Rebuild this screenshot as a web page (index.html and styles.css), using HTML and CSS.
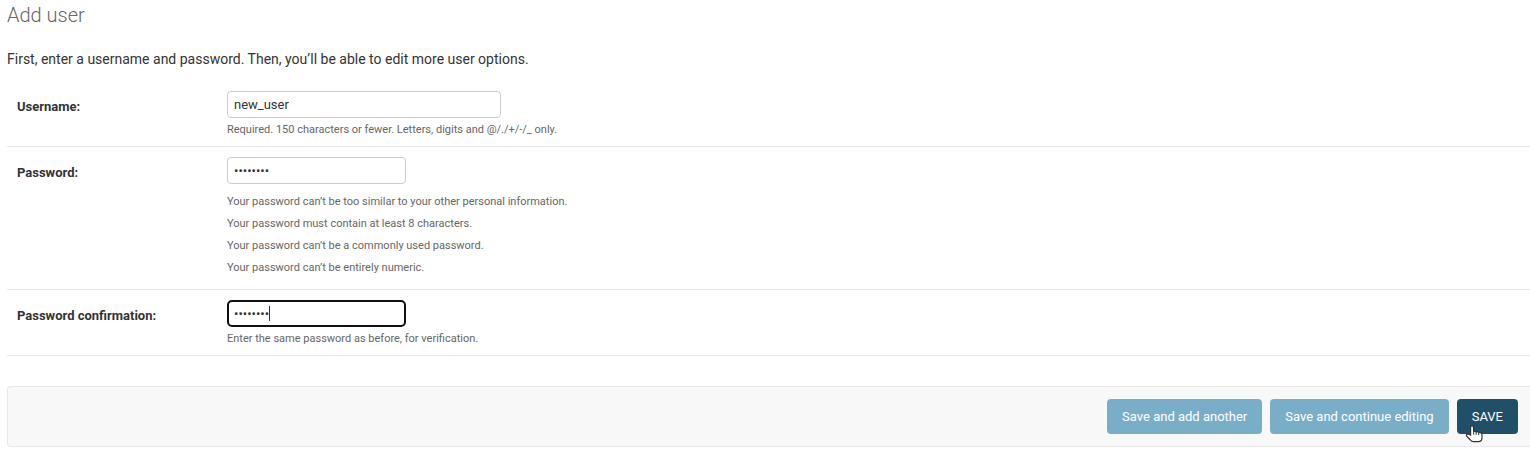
FILE: index.html
```html
<!DOCTYPE html>
<html lang="en">
<head>
<meta charset="utf-8">
<title>Add user</title>
<link rel="stylesheet" href="styles.css">
</head>
<body>
<main class="content">
  <h1 class="title">Add user</h1>
  <form>
    <p class="intro">First, enter a username and password. Then, you’ll be able to edit more user options.</p>
    <div class="form-row">
      <label class="label" for="username">Username:</label>
      <div class="field">
        <input class="input input-wide" id="username" type="text" value="new_user">
        <div class="help">Required. 150 characters or fewer. Letters, digits and @/./+/-/_ only.</div>
      </div>
    </div>
    <div class="form-row">
      <label class="label" for="password1">Password:</label>
      <div class="field">
        <input class="input" id="password1" type="password" value="password">
        <ul class="help-list">
          <li>Your password can’t be too similar to your other personal information.</li>
          <li>Your password must contain at least 8 characters.</li>
          <li>Your password can’t be a commonly used password.</li>
          <li>Your password can’t be entirely numeric.</li>
        </ul>
      </div>
    </div>
    <div class="form-row">
      <label class="label" for="password2">Password confirmation:</label>
      <div class="field">
        <div class="focus-wrap">
          <input class="input input-focus" id="password2" type="password" value="password">
          <span class="caret"></span>
        </div>
        <div class="help">Enter the same password as before, for verification.</div>
      </div>
    </div>
    <div class="submit-row">
      <button class="button" type="button">Save and add another</button>
      <button class="button" type="button">Save and continue editing</button>
      <button class="button button-default" type="button">SAVE</button>
    </div>
  </form>
</main>
<svg class="cursor" viewBox="0 0 20 20" width="20" height="20">
  <path d="M5.6 11.2V3.2Q5.6 1.8 7.1 1.8T8.6 3.2V7.6Q10.2 6.6 11.2 8Q12.8 7.1 13.7 8.5Q17 8.1 17 11V13.8Q17 17.7 13.2 17.7H8.4Q6.6 17.7 5.4 16L1.6 12Q.8 10.4 2.5 10.1Q3.8 9.8 5.6 11.2Z" fill="#fff" stroke="#333" stroke-width="1.2" stroke-linejoin="round"/>
  <path d="M8.7 7.7v3M11.2 8v2.8M13.7 8.5v2.5" fill="none" stroke="#333"/>
</svg>
</body>
</html>
```
FILE: styles.css
```css
* { box-sizing: border-box; }
body {
  margin: 0;
  height: 453px;
  overflow: hidden;
  background: #fff;
  color: #333;
  font: 14px "Roboto", "Liberation Sans", sans-serif;
}
.content { padding-left: 7px; }
.title { margin: 0; padding-top: 3px; height: 50px; font-size: 20px; line-height: 24px; font-weight: 300; color: #666; }
.intro { margin: 0; height: 31px; line-height: 18px; }
.form-row { display: flex; padding: 10px; border-bottom: 1px solid #e8e8e8; }
.label { width: 210px; padding-top: 8px; font-size: 13px; line-height: 15px; font-weight: 700; }
.field { display: flex; flex-direction: column; align-items: flex-start; }
.input {
  width: 179px;
  height: 27px;
  padding: 5px 6px;
  border: 1px solid #ccc;
  border-radius: 4px;
  outline: none;
  background: #fff;
  color: #333;
  font: 13px "Roboto", "Liberation Sans", sans-serif;
}
.input-wide { width: 274px; }
.input-focus { border: 2px solid #101010; border-radius: 5px; padding: 4px 5px; display: block; }
.focus-wrap { position: relative; }
.caret { position: absolute; left: 42px; top: 6px; width: 1px; height: 15px; background: #333; }
.help { padding-top: 5px; height: 18px; font-size: 11px; line-height: 14px; color: #666; }
.help-list { list-style: none; margin: 7px 0 0; padding: 0; font-size: 11px; line-height: 22px; color: #666; }
.submit-row {
  display: flex;
  justify-content: flex-end;
  gap: 8px;
  height: 61px;
  margin-top: 30px;
  padding: 12px 12px 12px 14px;
  border: 1px solid #e8e8e8;
  border-right: 0;
  border-radius: 4px 0 0 4px;
  background: #f8f8f8;
}
.button {
  height: 35px;
  padding: 0 15px;
  border: 0;
  border-radius: 4px;
  background: #79aec8;
  color: #fff;
  font: 13px "Roboto", "Liberation Sans", sans-serif;
}
.button-default { background: #205067; }
.cursor { position: absolute; left: 1465px; top: 424px; }
```
